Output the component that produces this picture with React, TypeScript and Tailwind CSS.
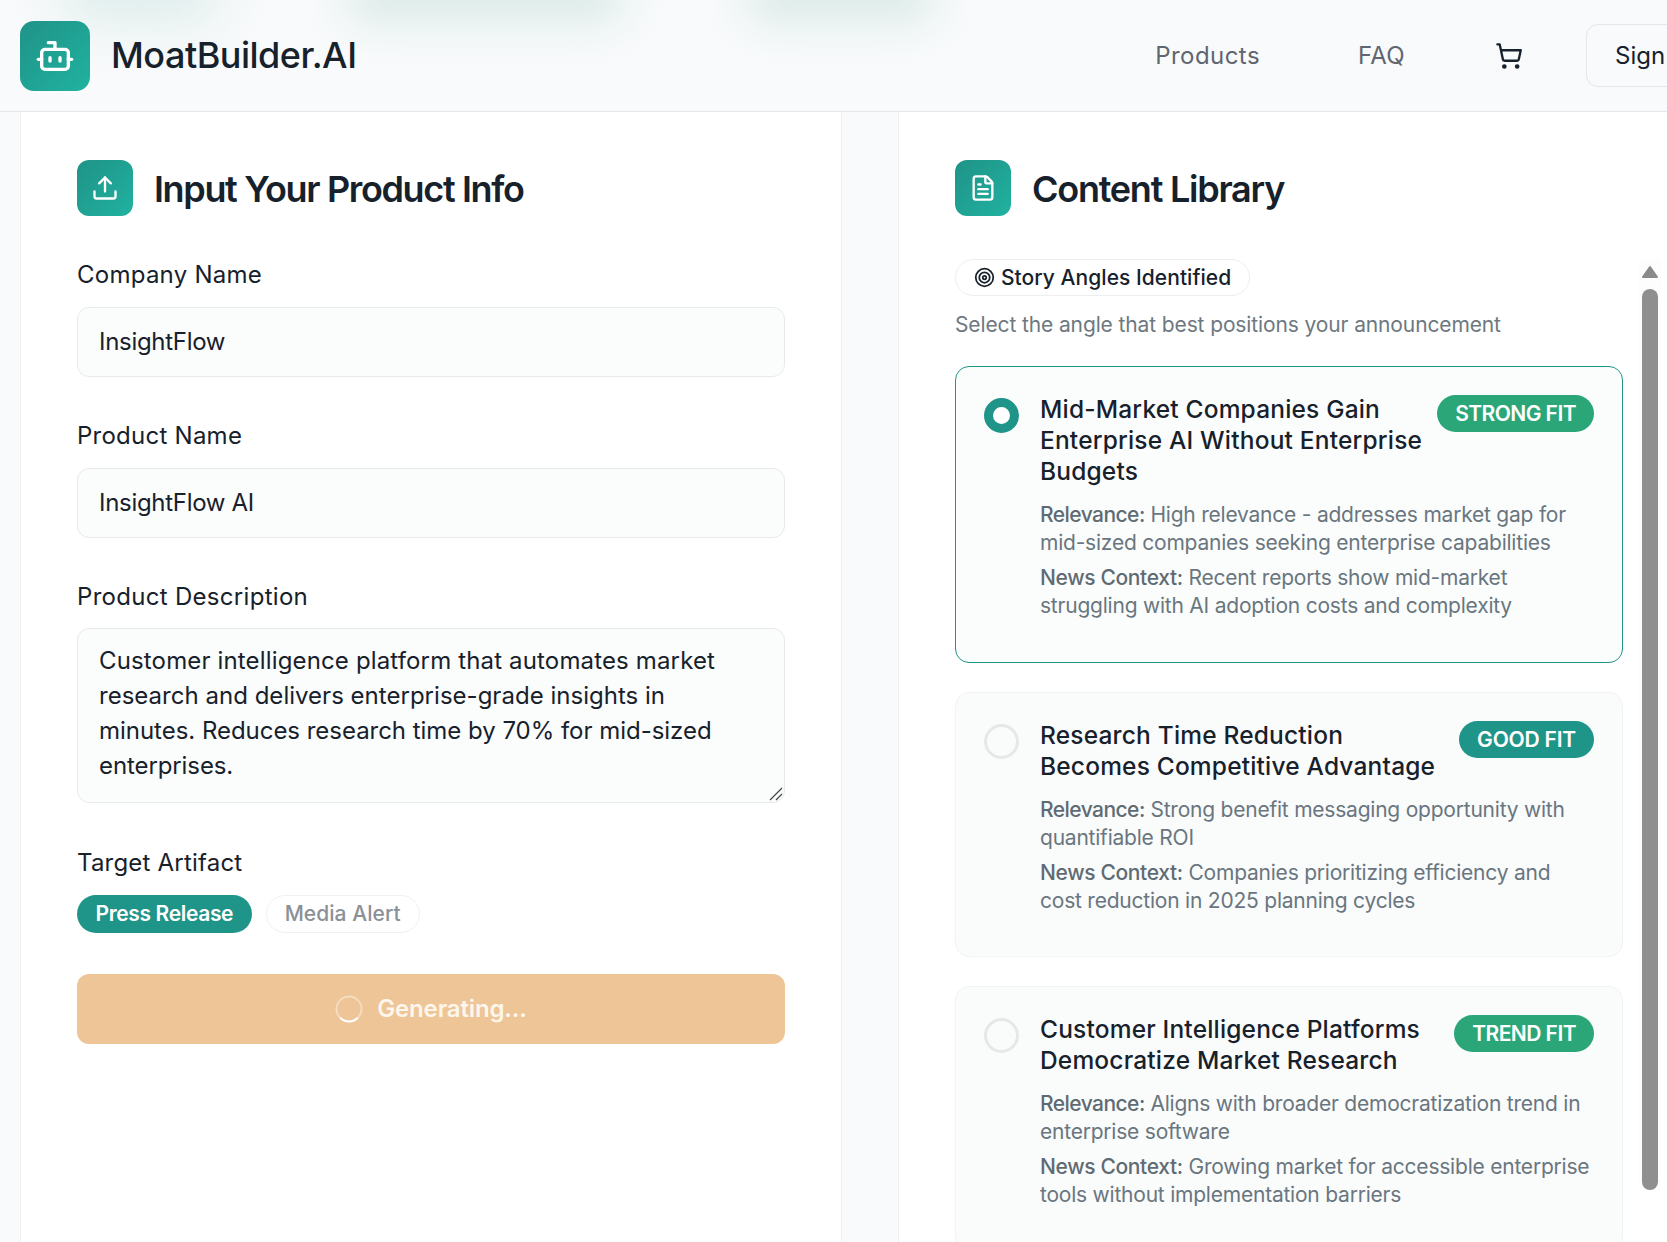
import { Bot, Upload, FileText, Target, ShoppingCart } from "lucide-react";

function IconBox({ children }: { children: React.ReactNode }) {
  return (
    <div className="flex h-[56px] w-[56px] shrink-0 items-center justify-center rounded-[12px] bg-gradient-to-br from-[#1f9387] to-[#20b2a0] text-white">
      {children}
    </div>
  );
}

function Field({ label, value }: { label: string; value: string }) {
  return (
    <div className="mb-[43px]">
      <div className="mb-[17px] h-[31px] text-[24px] leading-[31px] tracking-[0.25px] text-[#17212b]">{label}</div>
      <div className="flex h-[70px] items-center rounded-[12px] border border-[#e7eaec] bg-[#fbfcfc] px-[21px] text-[24px] tracking-[-0.3px] text-[#17212b]">
        {value}
      </div>
    </div>
  );
}

const angles = [
  {
    title: ["Mid-Market Companies Gain", "Enterprise AI Without Enterprise", "Budgets"],
    fit: "STRONG FIT",
    fitClass: "bg-[#2ba678] tracking-[-0.55px]",
    selected: true,
    rel: ["High relevance - addresses market gap for", "mid-sized companies seeking enterprise capabilities"],
    news: ["Recent reports show mid-market", "struggling with AI adoption costs and complexity"],
    h: "h-[297px]",
  },
  {
    title: ["Research Time Reduction", "Becomes Competitive Advantage"],
    fit: "GOOD FIT",
    fitClass: "bg-[#1f9488] tracking-[-0.2px]",
    selected: false,
    rel: ["Strong benefit messaging opportunity with", "quantifiable ROI"],
    news: ["Companies prioritizing efficiency and", "cost reduction in 2025 planning cycles"],
    h: "h-[265px]",
  },
  {
    title: ["Customer Intelligence Platforms", "Democratize Market Research"],
    fit: "TREND FIT",
    fitClass: "bg-[#2ba678] tracking-[-0.55px]",
    selected: false,
    rel: ["Aligns with broader democratization trend in", "enterprise software"],
    news: ["Growing market for accessible enterprise", "tools without implementation barriers"],
    h: "h-[265px]",
  },
];

function AngleCard({ a }: { a: (typeof angles)[number] }) {
  return (
    <div
      className={`${a.h} mb-[29px] shrink-0 rounded-[14px] border pl-[28px] pr-[29px] pt-[27px] ${
        a.selected ? "border-[#1f9488] bg-[#fbfdfc]" : "border-[#f1f3f4] bg-[#fafbfb]"
      }`}
    >
      <div className="flex">
        <div
          className={`mr-[21px] mt-[4px] h-[35px] w-[35px] shrink-0 rounded-full ${
            a.selected ? "border-[9px] border-[#1f9488] bg-white" : "border-[3px] border-[#e5e7e9]"
          }`}
        />
        <div className="min-w-0 flex-1">
          <div className="flex justify-between">
            <div className="text-[24.5px] font-medium leading-[31px] tracking-[0.18px] text-[#17212b]">
              {a.title.map((t) => (
                <div key={t} className="whitespace-nowrap">{t}</div>
              ))}
            </div>
            <div
              className={`${a.fitClass} mr-[-1px] mt-[1px] flex h-[37px] shrink-0 items-center rounded-full px-[18px] text-[21px] font-semibold text-white`}
            >
              {a.fit}
            </div>
          </div>
          <div className="mt-[14px] whitespace-nowrap text-[21px] leading-[28px] tracking-[-0.22px] text-[#69767f]">
            <div>
              <span className="font-medium tracking-[-0.55px] text-[#5f6b73]">Relevance:</span> {a.rel[0]}
            </div>
            <div>{a.rel[1]}</div>
            <div className="mt-[7px]">
              <span className="font-medium tracking-[-0.35px] text-[#5f6b73]">News Context:</span> {a.news[0]}
            </div>
            <div>{a.news[1]}</div>
          </div>
        </div>
      </div>
    </div>
  );
}

export default function App() {
  return (
    <div
      className="relative h-[1242px] w-full overflow-hidden bg-[#f8fafb]"
      style={{ fontFamily: '"Inter", "Noto Sans", sans-serif' }}
    >
      <div className="pointer-events-none absolute left-[60px] top-[-40px] h-[60px] w-[160px] rounded-full bg-[#dcecea] blur-[25px]" />
      <div className="pointer-events-none absolute left-[345px] top-[-30px] h-[52px] w-[280px] rounded-full bg-[#dbeae8] blur-[20px]" />
      <div className="pointer-events-none absolute left-[745px] top-[-30px] h-[52px] w-[190px] rounded-full bg-[#dbeae8] blur-[20px]" />
      <div className="relative w-[1738px]">
        <header className="flex h-[112px] items-center justify-between border-b border-[#e4e7ea] px-[20px]">
          <div className="flex items-center gap-[21px]">
            <div className="flex h-[70px] w-[70px] items-center justify-center rounded-[14px] bg-gradient-to-br from-[#1f9387] to-[#20b2a0] text-white">
              <Bot size={40} strokeWidth={2} />
            </div>
            <div className="mb-[2px] text-[36px] font-medium tracking-[-0.5px] text-[#17212b]">MoatBuilder.AI</div>
          </div>
          <div className="flex items-center">
            <span className="mr-[98px] text-[24px] tracking-[0.45px] text-[#5f6670]">Products</span>
            <span className="mr-[90px] text-[24px] tracking-[0.3px] text-[#5f6670]">FAQ</span>
            <ShoppingCart size={28} className="mr-[63px] text-[#17212b]" strokeWidth={2} />
            <div className="flex h-[63px] w-[132px] items-center rounded-[12px] border border-[#e4e7ea] pl-[28px] text-[24px] text-[#17212b]">
              Sign In
            </div>
          </div>
        </header>
        <main className="flex gap-[56px] pl-[20px]">
          <section className="h-[1130px] w-[822px] shrink-0 border-x border-[#eef0f2] bg-white px-[56px] pt-[48px]">
            <div className="mb-[43px] flex items-center gap-[21px]">
              <IconBox>
                <Upload size={28} strokeWidth={2} />
              </IconBox>
              <h2 className="mt-[2px] text-[36px] font-semibold tracking-[-1.35px] text-[#17212b]">Input Your Product Info</h2>
            </div>
            <Field label="Company Name" value="InsightFlow" />
            <Field label="Product Name" value="InsightFlow AI" />
            <div className="mb-[44px]">
              <div className="mb-[16px] h-[31px] text-[24px] leading-[31px] tracking-[0.3px] text-[#17212b]">Product Description</div>
              <div className="relative h-[175px] rounded-[12px] border border-[#e7eaec] bg-[#fbfcfc] px-[21px] pt-[14px] text-[24px] leading-[35px] text-[#17212b]">
                <div className="tracking-[0.15px]">Customer intelligence platform that automates market</div>
                <div className="tracking-[0.02px]">research and delivers enterprise-grade insights in</div>
                <div className="tracking-[-0.03px]">minutes. Reduces research time by 70% for mid-sized</div>
                <div className="tracking-[-0.1px]">enterprises.</div>
                <svg className="absolute bottom-[1px] right-[1px]" width="14" height="14" viewBox="0 0 14 14" stroke="#444" strokeWidth="1.2">
                  <path d="M1 13 13 1M7 13l6-6" />
                </svg>
              </div>
            </div>
            <div className="mb-[17px] h-[31px] text-[24px] leading-[31px] tracking-[0.2px] text-[#17212b]">Target Artifact</div>
            <div className="mb-[41px] flex gap-[14px]">
              <div className="flex h-[38px] items-center rounded-full bg-[#1f9488] px-[18.5px] text-[21px] font-semibold tracking-[-0.35px] text-white">
                Press Release
              </div>
              <div className="flex h-[38px] items-center rounded-full border border-[#eff1f2] px-[18px] text-[21px] font-medium tracking-[0.05px] text-[#8b9096]">
                Media Alert
              </div>
            </div>
            <div className="flex h-[70px] items-center justify-center gap-[14px] rounded-[12px] bg-[#edc596] text-[24px] font-semibold tracking-[-0.15px] text-[#fdf6ec]">
              <svg width="28" height="28" viewBox="0 0 28 28" fill="none">
                <circle cx="14" cy="14" r="12.5" stroke="#f3dcc0" strokeWidth="2" />
                <path d="M5.2 22.8A12.5 12.5 0 0 0 22.8 22.8" stroke="#fff" strokeWidth="2" />
              </svg>
              Generating...
            </div>
          </section>
          <section className="h-[1130px] w-[820px] shrink-0 border-l border-[#eef0f2] bg-white pl-[56px] pt-[48px]">
            <div className="mb-[43px] flex items-center gap-[21px]">
              <IconBox>
                <FileText size={28} strokeWidth={2} />
              </IconBox>
              <h2 className="mt-[2px] text-[36px] font-semibold tracking-[-1.25px] text-[#17212b]">Content Library</h2>
            </div>
            <div className="flex">
              <div className="w-[668px] shrink-0">
                <div className="inline-flex h-[37px] items-center gap-[6px] rounded-full border border-[#eceef0] px-[18px] text-[21px] font-medium tracking-[0.05px] text-[#17212b]">
                  <Target size={21} strokeWidth={2} />
                  Story Angles Identified
                </div>
                <div className="mb-[27px] mt-[15px] text-[21px] leading-[28px] tracking-[-0.12px] text-[#6d7880]">
                  Select the angle that best positions your announcement
                </div>
                {angles.map((a) => (
                  <AngleCard key={a.fit} a={a} />
                ))}
              </div>
              <div className="ml-[16px] flex w-[22px] shrink-0 flex-col items-center self-start bg-[#fdfdfd] pt-[6px]">
                <svg width="18" height="14" viewBox="0 0 18 14" fill="#8a8a8a" stroke="#8a8a8a" strokeWidth="2" strokeLinejoin="round">
                  <path d="M9 2 2 12h14z" />
                </svg>
                <div className="mt-[10px] h-[901px] w-[16px] rounded-full bg-[#8f8f8f]" />
              </div>
            </div>
          </section>
        </main>
      </div>
    </div>
  );
}
